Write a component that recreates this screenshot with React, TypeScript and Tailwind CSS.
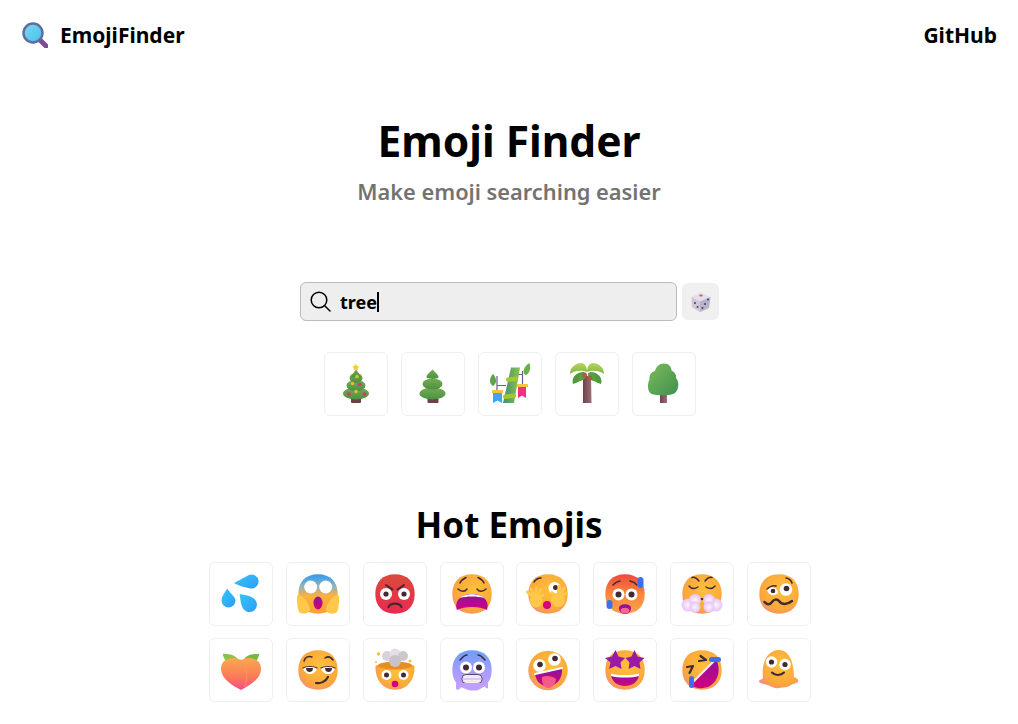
const font = { fontFamily: '"Noto Sans", sans-serif' };

function Defs() {
  return (
    <svg className="absolute w-0 h-0">
      <defs>
        <radialGradient id="yellow" cx="0.56" cy="0.4" r="0.68">
          <stop offset="0" stopColor="#ffc13c" />
          <stop offset="0.72" stopColor="#fba83a" />
          <stop offset="0.92" stopColor="#f6936a" />
          <stop offset="1" stopColor="#f58aa0" />
        </radialGradient>
        <linearGradient id="red" x1="0" y1="0" x2="0" y2="1">
          <stop offset="0" stopColor="#db4a3a" />
          <stop offset="1" stopColor="#e92a50" />
        </linearGradient>
        <linearGradient id="hot" x1="0" y1="0" x2="0" y2="1">
          <stop offset="0" stopColor="#ef4a3c" />
          <stop offset="0.55" stopColor="#fb8a3c" />
          <stop offset="1" stopColor="#f9a04a" />
        </linearGradient>
        <linearGradient id="fear" x1="0" y1="0" x2="0" y2="1">
          <stop offset="0" stopColor="#2f9bf0" />
          <stop offset="0.3" stopColor="#8db3c0" />
          <stop offset="0.55" stopColor="#fdb13a" />
          <stop offset="1" stopColor="#fba03a" />
        </linearGradient>
        <linearGradient id="cold" x1="0" y1="0" x2="0" y2="1">
          <stop offset="0" stopColor="#6d9ff5" />
          <stop offset="0.6" stopColor="#ab9cff" />
          <stop offset="1" stopColor="#c0a0ff" />
        </linearGradient>
        <linearGradient id="water" x1="0" y1="0" x2="1" y2="1">
          <stop offset="0" stopColor="#35c5f8" />
          <stop offset="1" stopColor="#2f9cf5" />
        </linearGradient>
        <linearGradient id="mouth" x1="0" y1="0" x2="0" y2="1">
          <stop offset="0" stopColor="#8a149e" />
          <stop offset="1" stopColor="#d4007c" />
        </linearGradient>
        <linearGradient id="peach" x1="0" y1="0" x2="0" y2="1">
          <stop offset="0" stopColor="#fba94e" />
          <stop offset="0.6" stopColor="#fb7a58" />
          <stop offset="1" stopColor="#fb4a8a" />
        </linearGradient>
        <linearGradient id="pine" x1="0" y1="0" x2="0" y2="1">
          <stop offset="0" stopColor="#75ad50" />
          <stop offset="1" stopColor="#4c8f42" />
        </linearGradient>
        <linearGradient id="crown" x1="0" y1="0" x2="1" y2="1">
          <stop offset="0" stopColor="#7dbb5a" />
          <stop offset="1" stopColor="#3f9050" />
        </linearGradient>
        <linearGradient id="palm" x1="0" y1="0" x2="0" y2="1">
          <stop offset="0" stopColor="#b6d65a" />
          <stop offset="1" stopColor="#7fb544" />
        </linearGradient>
        <linearGradient id="trunk" x1="0" y1="0" x2="1" y2="0">
          <stop offset="0" stopColor="#6f4346" />
          <stop offset="1" stopColor="#9c6d7a" />
        </linearGradient>
        <linearGradient id="lens" x1="0" y1="0" x2="1" y2="1">
          <stop offset="0" stopColor="#7fd8f5" />
          <stop offset="1" stopColor="#42c0ec" />
        </linearGradient>
        <linearGradient id="bamboo" x1="0" y1="0" x2="1" y2="0">
          <stop offset="0" stopColor="#3f8f7a" />
          <stop offset="1" stopColor="#8fc24a" />
        </linearGradient>
        <radialGradient id="cloud" cx="0.5" cy="0.5" r="0.6">
          <stop offset="0" stopColor="#fdf4ff" />
          <stop offset="1" stopColor="#e2b8f5" />
        </radialGradient>
      </defs>
    </svg>
  );
}

const head = "M20 0.3C32.5 0.3 39.7 8 39.7 20C39.7 32 32.5 39.7 20 39.7C7.5 39.7 0.3 32 0.3 20C0.3 8 7.5 0.3 20 0.3Z";
const ink = "#3f2a35";
const hand = "#ffc84a";

function Face({ fill = "url(#yellow)" }: { fill?: string }) {
  return <path d={head} fill={fill} />;
}

function Eye({ x, y, r = 6.5, px = 0, py = 0, pr = 3 }: { x: number; y: number; r?: number; px?: number; py?: number; pr?: number }) {
  return (
    <>
      <circle cx={x} cy={y} r={r} fill="#fff" />
      <circle cx={x + px} cy={y + py} r={pr} fill={ink} />
    </>
  );
}

function Line({ d, w = 1.5, c = ink }: { d: string; w?: number; c?: string }) {
  return <path d={d} fill="none" stroke={c} strokeWidth={w} strokeLinecap="round" strokeLinejoin="round" />;
}

const trees = [
  <g key="xmas">
    <rect x="15" y="33" width="10" height="6" rx="1" fill="#6e4045" />
    <ellipse cx="20" cy="29.5" rx="13" ry="6" fill="url(#pine)" />
    <ellipse cx="20" cy="21.5" rx="9.5" ry="5.5" fill="url(#pine)" />
    <ellipse cx="20" cy="14" rx="6.5" ry="5" fill="url(#pine)" />
    <path d="M20 5L25 13H15Z" fill="url(#pine)" />
    <path d="M19.7 -0.3L21 2L23.2 2.4L21.6 4.1L22 6.2L19.7 5.2L17.4 6.2L17.8 4.1L16.2 2.4L18.4 2Z" fill="#fcc93a" />
    <circle cx="21" cy="12.5" r="1.8" fill="#e9b93c" />
    <circle cx="16.5" cy="19.5" r="1.7" fill="#e9b93c" />
    <circle cx="23.7" cy="20.5" r="1.8" fill="#d8396a" />
    <circle cx="13" cy="30" r="1.8" fill="#d8396a" />
    <circle cx="20" cy="27.5" r="1.7" fill="#e9b93c" />
    <circle cx="28.3" cy="30" r="1.8" fill="#d8396a" />
  </g>,
  <g key="pine">
    <rect x="14.5" y="34" width="11" height="5" rx="1" fill="#6e4045" />
    <ellipse cx="19.5" cy="29.5" rx="13" ry="6" fill="url(#pine)" />
    <ellipse cx="19.5" cy="20" rx="10" ry="5.5" fill="url(#pine)" />
    <path d="M19.5 5.5C22 8 25.5 11 25.5 13C25.5 15.5 13.5 15.5 13.5 13C13.5 11 17 8 19.5 5.5Z" fill="url(#pine)" />
  </g>,
  <g key="tanabata">
    <path d="M7 12V27M32.500 7V21M7 21.500H16M26 10.500H32.500" stroke="#68608f" strokeWidth="1.200" fill="none" />
    <path d="M21 3.500H30L24 39H13Z" fill="url(#bamboo)" />
    <rect x="16" y="13" width="12" height="4.500" rx="2" fill="#a5c72e" transform="rotate(-6 22 15)" />
    <rect x="13" y="30" width="13" height="4.500" rx="2" fill="#a5c72e" transform="rotate(-6 19 32)" />
    <path d="M3 10C-1 14 -1 20 3 22C7 20 7 14 3 10Z" fill="#5fa24a" />
    <path d="M39.500 -1C34 2 32 8 35 11C40 10 41 4 39.500 -1Z" fill="#6ab04a" />
    <rect x="2" y="26" width="11" height="3" rx="0.500" fill="#f7c43f" />
    <path d="M3 29H12V39L7.500 36.500L3 39Z" fill="#3fa6f5" />
    <rect x="27" y="20" width="11" height="3" rx="0.500" fill="#f7c43f" />
    <path d="M28 23H36V34L32 31.500L28 34Z" fill="#f5317f" />
  </g>,
  <g key="palm">
    <path d="M16 12H24L24.500 39H16Z" fill="url(#trunk)" />
    <path d="M6 20C4 14 9 8 17 8C20 12 14 18 6 20Z" fill="#4c9a3c" />
    <path d="M34 20C36 14 31 8 23 8C20 12 26 18 34 20Z" fill="#4c9a3c" />
    <path d="M11 17C11 11 15 8 19 9C20 13 16 18 11 17Z" fill="#5d9f3c" />
    <path d="M29 17C29 11 25 8 21 9C20 13 24 18 29 17Z" fill="#5d9f3c" />
    <path d="M3 10C3 3 9 -1 14 -1C18 -1 20 3 20 8C15 6 8 6 3 10Z" fill="url(#palm)" />
    <path d="M37 10C37 3 31 -1 26 -1C22 -1 20 3 20 8C25 6 32 6 37 10Z" fill="url(#palm)" />
    <circle cx="17.500" cy="11" r="2.500" fill="#a8623f" />
    <circle cx="23" cy="14" r="2.500" fill="#a8623f" />
  </g>,
  <g key="tree">
    <rect x="16" y="30" width="7" height="9" fill="url(#trunk)" />
    <path d="M20 -0.500C25 -0.500 27.500 3 27.500 6.500C31 8 32.500 11 32 14C35 17 35.500 25 31 29C27 32 13 32 7.500 30C3.500 28 3 20 5.500 15.500C5 11 7 8 11 7C12 3 15 -0.500 20 -0.500Z" fill="url(#crown)" />
  </g>,
];

const hot = [
  <g key="sweat" fill="url(#water)">
    <path d="M13 9L28 1A7 7 0 1 1 30 14.500C26 14 18 12 13 9Z" />
    <path d="M6.300 14.700C3 19 0.500 23 0.500 26.500A7 7 0 0 0 14.500 26.500C14.500 23 9 19 6.300 14.700Z" />
    <path d="M18.700 20C24 21 29 21.500 32 24A7.500 7.500 0 1 1 21.500 33.500C19.500 29.500 19.300 25 18.700 20Z" />
  </g>,
  <g key="fear">
    <path d={head} fill="url(#fear)" />
    <circle cx="12.700" cy="13" r="6.500" fill="#fff" />
    <circle cx="27.700" cy="13" r="6.500" fill="#fff" />
    <ellipse cx="20" cy="29" rx="4.500" ry="6.500" fill="url(#mouth)" />
    <path d="M-1 23C-1 20 1 21 3 22C7 24 11 30 12 35C12 40 4 41 1 38C-1 34 -1 28 -1 23Z" fill={hand} />
    <path d="M41 23C41 20 39 21 37 22C33 24 29 30 28 35C28 40 36 41 39 38C41 34 41 28 41 23Z" fill={hand} />
  </g>,
  <g key="angry">
    <Face fill="url(#red)" />
    <Eye x={11} y={20} r={6} pr={2.600} />
    <Eye x={29} y={20} r={6} pr={2.600} />
    <Line d="M11 11L17.500 15.500M29 11L22.500 15.500" w={2} />
    <Line d="M13.500 33C15.500 28.500 24.500 28.500 26.500 33" w={2.200} />
  </g>,
  <g key="weary">
    <Face />
    <Line d="M8 9C9 6.500 12 4.500 14 3.500M32 9C31 6.500 28 4.500 26 3.500" />
    <Line d="M6 15C9 18 13 18 15 15M34 15C31 18 27 18 25 15" />
    <path d="M5 36C2 28 8 20 20 20C32 20 38 28 35 36C28 32 12 32 5 36Z" fill="url(#mouth)" />
    <path d="M8 24C12 19 28 19 32 24C26 22 14 22 8 24Z" fill="#fff" />
  </g>,
  <g key="peek">
    <Face />
    <Line d="M6 8C8 5 11 4 13 4" />
    <circle cx="26.500" cy="14" r="6" fill="#fff" />
    <circle cx="27.500" cy="13.500" r="2.500" fill={ink} />
    <circle cx="19" cy="31" r="4" fill="#d4007c" />
    <g stroke={hand} strokeWidth="3" strokeLinecap="round" fill="none">
      <path d="M8 25L-0.500 18M8 25L3 15M8 25L8 13.500M8 25L12.500 15.500M8 25L15 21" />
      <path d="M30 24L38.500 19M30 24L36 14M30 24L31 12.500M30 24L24 18.500" />
    </g>
    <circle cx="8" cy="27" r="6.500" fill={hand} />
    <circle cx="30" cy="26" r="7" fill={hand} />
  </g>,
  <g key="hot">
    <Face fill="url(#hot)" />
    <Eye x={13.500} y={20.500} r={6} pr={3} />
    <Eye x={26.500} y={20.500} r={6} pr={3} />
    <Line d="M8 11C10 8.500 12 7.500 15 7M32 11C30 8.500 28 7.500 25 7" />
    <path d="M14 34C14 29 26 29 26 34C26 38 23 40 20 40C17 40 14 38 14 34Z" fill="url(#mouth)" />
    <path d="M15.500 36C17 33 23 33 24.500 36C24 39 22 39.500 20 39.500C18 39.500 16 39 15.500 36Z" fill="#f56a8a" />
    <rect x="32.500" y="3" width="6" height="11" rx="3" fill="#3f6ff0" />
    <rect x="1.500" y="26" width="6" height="9" rx="3" fill="#3f6ff0" />
  </g>,
  <g key="steam">
    <Face />
    <Line d="M10 3.500C12 3 15 4.500 17 7M30 3.500C28 3 25 4.500 23 7" />
    <Line d="M7 12C9.500 15 13 15 16 13M33 12C30.500 15 27 15 24 13" />
    <Line d="M15 28C16 24 24 24 25 28" w={2} />
    <circle cx="6" cy="31" r="6.500" fill="url(#cloud)" />
    <circle cx="13" cy="26" r="6" fill="url(#cloud)" />
    <circle cx="13" cy="33" r="5.500" fill="url(#cloud)" />
    <circle cx="34" cy="31" r="6.500" fill="url(#cloud)" />
    <circle cx="27" cy="26" r="6" fill="url(#cloud)" />
    <circle cx="27" cy="33" r="5.500" fill="url(#cloud)" />
  </g>,
  <g key="woozy">
    <Face />
    <path d="M8 16C11 11 19 13 19 19C15 23 9 21 8 16Z" fill="#fff" />
    <circle cx="27" cy="15.500" r="6.300" fill="#fff" />
    <circle cx="27.500" cy="14.500" r="2.800" fill={ink} />
    <circle cx="14" cy="17" r="2.300" fill={ink} />
    <Line d="M8 15C10 13 14 11 17 12M27 4C29 4 32 6 33 9" />
    <Line d="M5.500 28C8 31 11 31 13 28C15 25 18 25 20 27C23 31 28 31 33 27" w={2.500} />
  </g>,
];

const hot2 = [
  <g key="peach">
    <path d="M4 10C2 6 1 3 3 4C7 4 12 4 16 8C17 9 17 10 16 10Z" fill="#8bc34a" />
    <path d="M36 10C38 6 39 3 37 4C33 4 28 4 24 8C23 9 23 10 24 10Z" fill="#77b640" />
    <path d="M20 10C26 6 40 7 40 19C40 29 28 36 20 40C12 36 0 29 0 19C0 7 14 6 20 10Z" fill="url(#peach)" />
    <path d="M20 10C26 16 27 26 24 37" fill="none" stroke="#fb9a60" strokeOpacity="0.6" strokeWidth="1.500" />
  </g>,
  <g key="smirk">
    <Face />
    <Line d="M6 11C7 7 11 5.500 14 7M27 8C30 6 33 7 35 10" />
    <path d="M5 18C8 16 16 16 19 18C18 22 15 24 12 24C9 24 6 22 5 18Z" fill="#fff" />
    <path d="M23 18C26 16 34 16 37 18C36 22 33 24 30 24C27 24 24 22 23 18Z" fill="#fff" />
    <path d="M8 18H15C15 21 13 22 11.500 22C10 22 8 21 8 18Z" fill={ink} />
    <path d="M27 18H34C34 21 32 22 30.500 22C29 22 27 21 27 18Z" fill={ink} />
    <Line d="M5 18C8 16 16 16 19 18M23 18C26 16 34 16 37 18" w={1.200} />
    <Line d="M18 33C23 34 28 31 30 27" w={2.200} />
  </g>,
  <g key="blown">
    <path d="M0.500 16C7 12 33 12 39.500 16C40 30 32 39.700 20 39.700C8 39.700 0 30 0.500 16Z" fill="url(#yellow)" />
    <ellipse cx="20" cy="15.500" rx="17" ry="4" fill="#e58f22" />
    <circle cx="12" cy="6" r="5" fill="#d9d2d8" />
    <circle cx="20" cy="4" r="5.500" fill="#e4dfe4" />
    <circle cx="28" cy="6" r="5" fill="#cfc7cf" />
    <circle cx="20" cy="11" r="6" fill="#c9c1cb" />
    <circle cx="3.500" cy="4" r="1.700" fill="#f6c03e" />
    <circle cx="1" cy="12" r="1" fill="#f6c03e" />
    <circle cx="35" cy="11" r="1.500" fill="#f6c03e" />
    <Eye x={11.500} y={25} r={5} pr={2.500} />
    <Eye x={28.500} y={25} r={5} pr={2.500} />
    <circle cx="20" cy="34" r="3.300" fill="#d4007c" />
  </g>,
  <g key="cold">
    <Face fill="url(#cold)" />
    <Eye x={14} y={17.500} r={6} pr={3} />
    <Eye x={27} y={17.500} r={6} pr={3} />
    <Line d="M8 10C10 8 12 5 15 5M33 10C31 8 29 5 26 5" />
    <rect x="10" y="24.500" width="20" height="9" rx="4" fill="#f4e8fb" stroke={ink} strokeWidth="0.800" />
    <path d="M10 29H30" stroke="#bba0d0" strokeWidth="0.800" />
    <path d="M4 33V39C7 41 9 38 9 36L14 39C17 41 26 41 28 39L33 36C33 38 35 39 36 38V33Z" fill="#bfa0ff" />
  </g>,
  <g key="zany">
    <circle cx="20" cy="20.500" r="19.700" fill="url(#yellow)" />
    <Eye x={11.500} y={15.500} r={6.300} px={0.500} py={-1} pr={2.800} />
    <Eye x={26.500} y={9.500} r={6.300} px={0.500} py={-1} pr={2.800} />
    <path d="M7 24L34 18C35 29 28 37 18 36C11 35 8 30 7 24Z" fill="url(#mouth)" />
    <path d="M7 24L34 18" stroke="#fff" strokeWidth="2" strokeLinecap="round" />
    <path d="M14 27C18 25 25 26 28 29C28 34 24 38 20 38C16 38 13 32 14 27Z" fill="#f3598a" />
  </g>,
  <g key="stars">
    <Face />
    <path d="M6 24C13 26 27 26 34 24C34 31 28 36 20 36C12 36 6 31 6 24Z" fill="url(#mouth)" />
    <path d="M6 23.500C13 25.500 27 25.500 34 23.500V26C27 28 13 28 6 26Z" fill="#fff" />
    <path d="M10.500 0L13.500 6.500L20 8L15.500 12.500L16.500 19L10.500 16L4 19L5.500 12.500L0 8L7 6.500Z" fill="#9a1aa8" />
    <path d="M29.500 0L32.500 6.500L39.500 8L34.500 12.500L35.500 19L29.500 16L23.500 19L24.500 12.500L20.500 8L26.500 6.500Z" fill="#9a1aa8" />
  </g>,
  <g key="rofl">
    <Face />
    <path d="M8 35L34 9C39 19 37 30 28 36C22 39 14 39 8 35Z" fill="url(#mouth)" />
    <path d="M8 35L34 9" stroke="#f7e9ee" strokeWidth="2.200" />
    <Line d="M18.500 6L24 10L17 11" w={2.200} />
    <Line d="M5 17L11 16L7.500 23" w={2.200} />
    <rect x="27" y="7" width="12" height="5" rx="2.500" fill="#3f6ff0" />
    <rect x="7" y="26" width="5" height="12" rx="2.500" fill="#3f6ff0" />
  </g>,
  <g key="melt">
    <path d="M4 28C2 10 10 0 20 0C30 0 35 12 35 27C38 28 40 30 39 32C37 34 35 33 32 35C28 38 24 37 20 38C15 39 12 36 8 35C5 34 -1 33 0 31C1 29 3 30 4 28Z" fill="url(#yellow)" />
    <Eye x={12.500} y={12} r={5.700} px={0} py={0} pr={2.600} />
    <Eye x={26} y={14.500} r={5.700} px={0} py={0} pr={2.600} />
    <Line d="M13 22.500C16 26 22 25.500 25 22.500" w={2} />
  </g>,
];

function Emoji({ children }: { children: React.ReactNode }) {
  return (
    <div className="flex h-16 w-full items-center justify-center rounded-md border border-[#efefef] bg-white">
      <svg width="40" height="40" viewBox="0 0 40 40" className="overflow-visible">
        {children}
      </svg>
    </div>
  );
}

export default function App() {
  return (
    <div className="h-[724px] overflow-hidden bg-white text-black" style={font}>
      <Defs />
      <header className="flex h-[70px] items-center justify-between pl-[22px] pr-[21px]">
        <div className="flex items-center gap-3">
          <svg width="26" height="26" viewBox="0 0 26 26">
            <path d="M17 17L24 24" stroke="#7e4a93" strokeWidth="5" strokeLinecap="round" />
            <circle cx="11" cy="11" r="9.500" fill="url(#lens)" stroke="#5f6f9c" strokeWidth="2.500" />
          </svg>
          <span className="mt-[2px] text-[21px] font-bold">EmojiFinder</span>
        </div>
        <span className="mt-[2px] text-[21px] font-bold">GitHub</span>
      </header>

      <div className="flex flex-col items-center">
        <h1 className="mt-[36px] text-[42.500px] leading-[70px] font-bold">Emoji Finder</h1>
        <p className="mt-[1px] text-[21.800px] leading-[30px] font-semibold text-[#737373]">Make emoji searching easier</p>

        <div className="mt-[75px] ml-[1px] flex items-center gap-[5px]">
          <div className="flex h-[39px] w-[377px] items-center gap-[9px] rounded-md border border-[#bbbbbb] bg-[#eeeeee] pl-[9px]">
            <svg width="21" height="21" viewBox="0 0 21 21" fill="none" stroke="#000" strokeWidth="1.500" strokeLinecap="round">
              <circle cx="9" cy="9" r="7.800" />
              <path d="M14.700 14.700L20 20" />
            </svg>
            <span className="text-[18px] leading-5 font-bold">tree</span>
            <span className="ml-[-9px] h-5 w-[1.500px] bg-black" />
          </div>
          <button className="flex h-[37px] w-[37px] items-center justify-center rounded-md bg-[#f0f0f0]">
            <svg width="20" height="20" viewBox="0 0 20 20">
              <path d="M10 0.500L19.500 5L18 16L9 20L1 15L0.500 5Z" fill="#e3deea" />
              <path d="M0.500 5L9 9.500L9 20L1 15Z" fill="#cfc8da" />
              <path d="M19.500 5L9 9.500L9 20L18 16Z" fill="#b9b1c8" />
              <ellipse cx="10" cy="3.500" rx="1.800" ry="1" fill="#e8525a" />
              <circle cx="4" cy="11" r="1" fill="#4a3c6a" />
              <circle cx="6.500" cy="15" r="1" fill="#4a3c6a" />
              <circle cx="17" cy="7.500" r="1" fill="#4a3c6a" />
              <circle cx="14" cy="12" r="1" fill="#4a3c6a" />
              <circle cx="11.500" cy="16" r="1" fill="#4a3c6a" />
            </svg>
          </button>
        </div>

        <div className="mt-[31px] ml-[2px] flex gap-[13px]">
          {trees.map((t) => (
            <div key={t.key} className="w-16">
              <Emoji>{t}</Emoji>
            </div>
          ))}
        </div>

        <h2 className="mt-[84px] text-[35px] leading-[50px] font-bold">Hot Emojis</h2>

        <div className="mt-[12px] ml-[2px] grid w-[602px] grid-cols-8 gap-x-[12.800px] gap-y-[12.400px]">
          {hot.concat(hot2).map((e) => (
            <Emoji key={e.key}>{e}</Emoji>
          ))}
        </div>
      </div>
    </div>
  );
}
